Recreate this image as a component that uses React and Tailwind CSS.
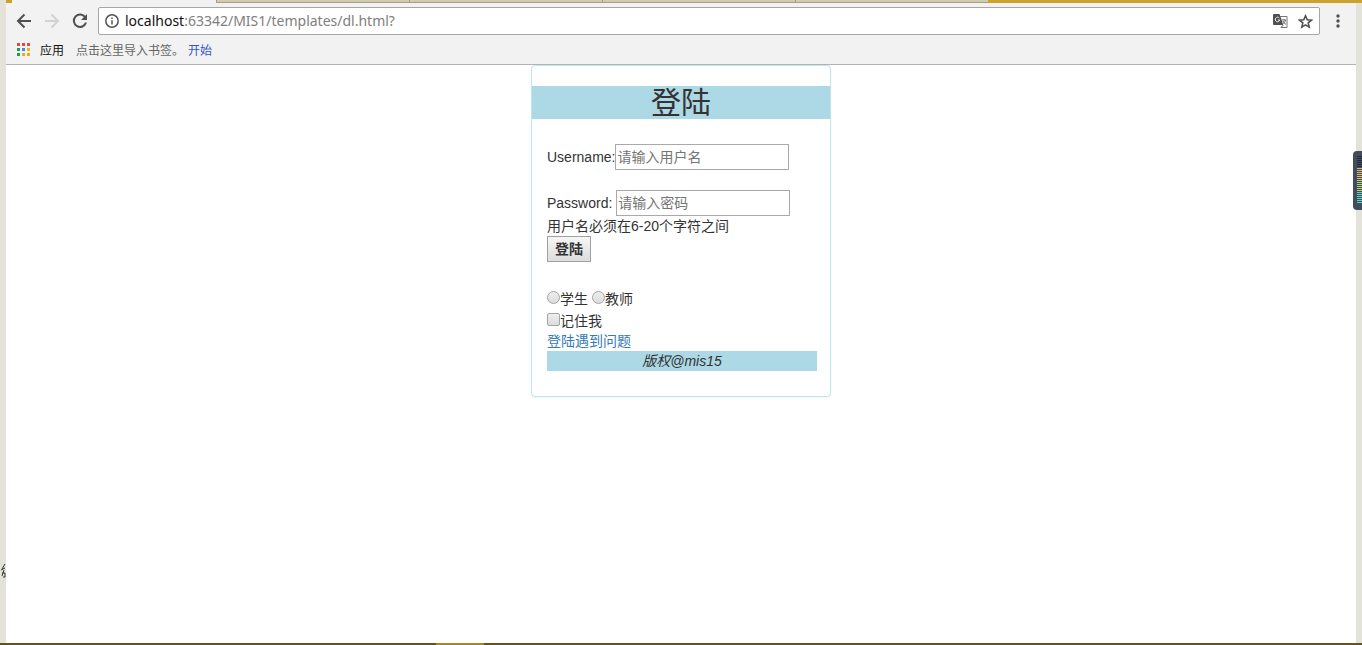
const TABS = ['mis', 'dl', 'flask', 'bootstrap']

const APP_DOTS = [
  'bg-[#dc4b3e]', 'bg-[#dc4b3e]', 'bg-[#dc4b3e]',
  'bg-[#1f9d58]', 'bg-[#4285f4]', 'bg-[#f2b50f]',
  'bg-[#1f9d58]', 'bg-[#e9ab17]', 'bg-[#e9ab17]',
]

const fieldClass =
  'h-[26px] w-[174px] border border-[#a9a9a9] bg-white px-px text-sm text-[#333] placeholder:text-[#757575] outline-none'

const boxClass =
  'mb-[3px] h-[13px] w-[13px] shrink-0 appearance-none border border-[#a5a5a5] bg-linear-to-b from-[#eeeeee] to-[#dcdcdc] checked:bg-[#555]'

function TabStrip() {
  return (
    <div className="flex h-[3px] bg-[#cda12c]">
      <div className="ml-1.5 w-[204px] bg-[#f2f2f2]" />
      {TABS.map((tab) => (
        <div key={tab} className="w-[193px] border-b border-l border-[#a79f84] bg-[#d3cbb0]" />
      ))}
    </div>
  )
}

function Toolbar() {
  return (
    <div className="flex h-9 items-center bg-[#f2f2f2] pr-4 pl-2.5">
      <button aria-label="Back" className="text-[#505050]">
        <svg width="16" height="16" viewBox="0 0 16 16" fill="none" stroke="currentColor" strokeWidth="2">
          <path d="M15 8H2.5M8.5 1.5L2 8l6.5 6.5" />
        </svg>
      </button>
      <button aria-label="Forward" className="ml-3 text-[#d2d2d2]">
        <svg width="16" height="16" viewBox="0 0 16 16" fill="none" stroke="currentColor" strokeWidth="2">
          <path d="M1 8h12.5M7.5 1.5L14 8l-6.5 6.5" />
        </svg>
      </button>
      <button aria-label="Reload" className="ml-3 text-[#505050]">
        <svg width="16" height="16" viewBox="0 0 16 16" fill="none" stroke="currentColor" strokeWidth="2">
          <path d="M13.2 4.2A6.2 6.2 0 1 0 14 9.5" />
          <path d="M15 1v6H9z" fill="currentColor" stroke="none" />
        </svg>
      </button>
      <div className="ml-2.5 flex h-7 flex-1 items-center rounded-xs border border-[#a6a6a6] bg-white px-1.5">
        <svg width="14" height="14" viewBox="0 0 14 14" fill="none" stroke="#555" strokeWidth="1.5" className="shrink-0">
          <circle cx="7" cy="7" r="6.2" />
          <path d="M7 6.2v4.3M7 3.4v1.6" />
        </svg>
        <div className="ml-1.5 flex-1 font-['Noto_Sans',sans-serif] text-sm text-[#808080]">
          <span className="text-[#111]">localhost</span>:63342/MIS1/templates/dl.html?
        </div>
        <button aria-label="Translate">
          <svg width="15" height="14" viewBox="0 0 15 14">
            <path d="M7 2.5h7v11H8" fill="#fff" stroke="#777" />
            <path d="M1 0h5.500l3.800 11H1a1 1 0 0 1-1-1V1a1 1 0 0 1 1-1z" fill="#505050" />
            <path d="M6.300 4A2.300 2.300 0 1 0 6.800 6H4.800" fill="none" stroke="#eee" />
            <path d="M8.500 6H13M11 5v1M12.500 6c-.5 2-1.500 3-3 4M10 7c.6 1.500 1.500 2.500 3 3.300M8 13.500l2.300-2.500" fill="none" stroke="#666" />
          </svg>
        </button>
        <button aria-label="Bookmark this page" className="ml-2.5">
          <svg width="15" height="15" viewBox="0 0 15 15" fill="none" stroke="#505050" strokeWidth="1.6">
            <path d="M7.500 1.800l1.700 3.900 4.300.4-3.300 2.800 1 4.200-3.700-2.200-3.700 2.200 1-4.200L1.500 6.100l4.300-.4z" />
          </svg>
        </button>
      </div>
      <button aria-label="Menu" className="ml-4">
        <svg width="4" height="14" viewBox="0 0 4 14" fill="#505050">
          <circle cx="2" cy="2" r="1.700" />
          <circle cx="2" cy="7" r="1.700" />
          <circle cx="2" cy="12" r="1.700" />
        </svg>
      </button>
    </div>
  )
}

function BookmarksBar() {
  return (
    <div className="flex h-[26px] items-center border-b border-[#b2b2b2] bg-[#f2f2f2] pb-0.5 pl-[11px] text-xs">
      <span className="mb-0.5 grid grid-cols-3 gap-[2px]">
        {APP_DOTS.map((dot, i) => (
          <span key={i} className={'h-[3px] w-[3px] ' + dot} />
        ))}
      </span>
      <button className="ml-2.5 text-[#111]">应用</button>
      <span className="ml-3 text-[#666]">点击这里导入书签。</span>
      <a href="#" className="ml-1 text-[#3457c9]">开始</a>
    </div>
  )
}

function LoginCard() {
  return (
    <form
      className="w-[300px] rounded-sm border border-[#bfe6e8] pt-5 pb-[25px] text-sm leading-5 text-[#333] shadow-xs"
      onSubmit={(e) => e.preventDefault()}
    >
      <h1 className="bg-[#add8e6] text-center text-[30px] leading-[33px]">登陆</h1>
      <div className="px-[15px] pt-[25px]">
        <div className="flex items-center">
          <label htmlFor="username">Username:</label>
          <input id="username" type="text" placeholder="请输入用户名" className={fieldClass} />
        </div>
        <div className="mt-5 flex items-center gap-1">
          <label htmlFor="password">Password:</label>
          <input id="password" type="password" placeholder="请输入密码" className={fieldClass} />
        </div>
        <p>用户名必须在6-20个字符之间</p>
        <button
          type="submit"
          className="block h-[26px] w-11 border border-[#a0a0a0] bg-linear-to-b from-[#f6f6f6] to-[#dddddd] font-bold"
        >
          登陆
        </button>
        <div className="mt-[26px] flex h-[22px] gap-1">
          <label className="flex items-center">
            <input type="radio" name="role" value="student" className={boxClass + ' rounded-full'} />
            学生
          </label>
          <label className="flex items-center">
            <input type="radio" name="role" value="teacher" className={boxClass + ' rounded-full'} />
            教师
          </label>
        </div>
        <label className="flex h-[21px] items-center">
          <input type="checkbox" name="remember" className={boxClass + ' rounded-xs'} />
          记住我
        </label>
        <a href="#" className="block text-[#337ab7]">登陆遇到问题</a>
        <footer className="mr-[-2px] bg-[#add8e6] text-center italic">版权@mis15</footer>
      </div>
    </form>
  )
}

export default function App() {
  return (
    <div className="relative flex min-h-screen flex-col bg-[#e3e3da] font-['Liberation_Sans','Noto_Sans_CJK_SC',sans-serif]">
      <div className="flex flex-1 flex-col pl-1.5">
        <TabStrip />
        <div className="mr-1.5 flex flex-1 flex-col bg-white">
          <Toolbar />
          <BookmarksBar />
          <main className="flex flex-1 items-start justify-center">
            <LoginCard />
          </main>
        </div>
      </div>
      <div className="flex h-0.5 bg-[#65531f]">
        <div className="ml-[32%] w-12 bg-[#a5862b]" />
      </div>

      {/* level meter docked to the screen edge */}
      <div className="absolute top-[151px] right-0 flex h-[59px] w-[9px] flex-col gap-px rounded-l-sm bg-[#414c5c] py-[5px] pl-1">
        {Array.from({ length: 24 }, (_, i) => (
          <span
            key={i}
            className={'h-px w-full ' + (i < 6 ? 'bg-[#252c38]' : i < 12 ? 'bg-[#e0b866]' : i < 18 ? 'bg-[#b5d06c]' : 'bg-[#62cfc4]')}
          />
        ))}
      </div>

      {/* piece of the window behind */}
      <svg className="absolute top-[564px] left-0" width="6" height="14" viewBox="0 0 6 14" fill="none" stroke="#333">
        <path d="M5 0L2 5M5 4L1 6M4 6L2 12M2 9h3v4H3" />
      </svg>
    </div>
  )
}
